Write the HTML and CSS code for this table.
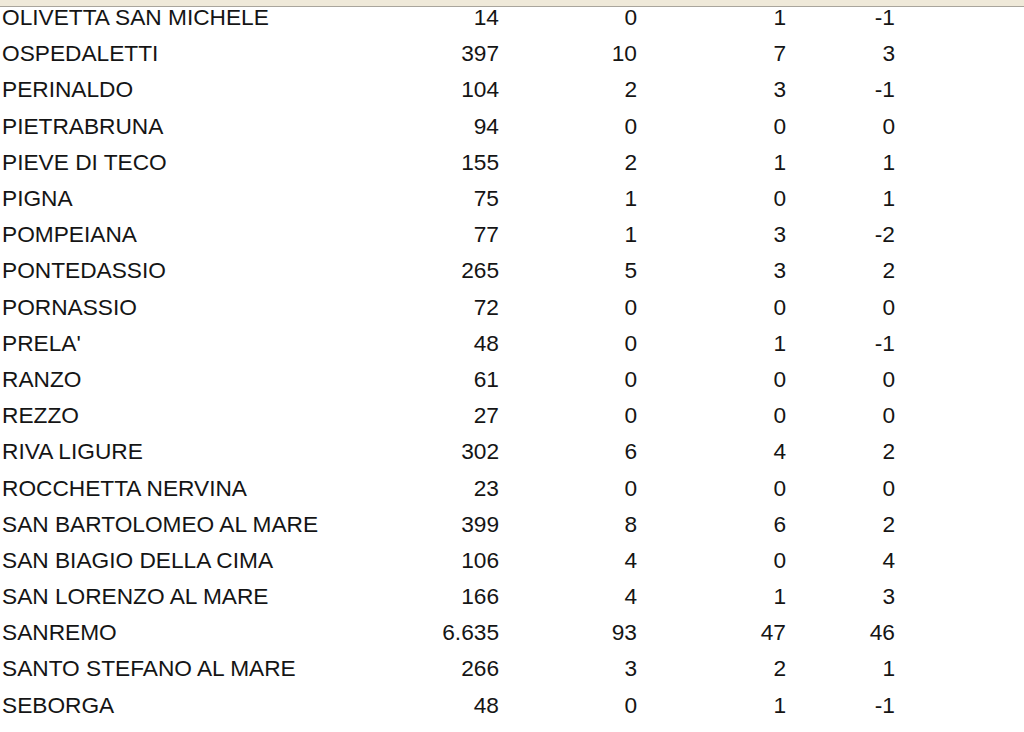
FILE: index.html
```html
<!DOCTYPE html>
<html lang="it">
<head>
<meta charset="utf-8">
<title>Comuni</title>
<link rel="stylesheet" href="styles.css">
</head>
<body>
<div class="topbar"></div>
<table class="data">
<tbody>
<tr><td class="name">OLIVETTA SAN MICHELE</td><td>14</td><td>0</td><td>1</td><td>-1</td></tr>
<tr><td class="name">OSPEDALETTI</td><td>397</td><td>10</td><td>7</td><td>3</td></tr>
<tr><td class="name">PERINALDO</td><td>104</td><td>2</td><td>3</td><td>-1</td></tr>
<tr><td class="name">PIETRABRUNA</td><td>94</td><td>0</td><td>0</td><td>0</td></tr>
<tr><td class="name">PIEVE DI TECO</td><td>155</td><td>2</td><td>1</td><td>1</td></tr>
<tr><td class="name">PIGNA</td><td>75</td><td>1</td><td>0</td><td>1</td></tr>
<tr><td class="name">POMPEIANA</td><td>77</td><td>1</td><td>3</td><td>-2</td></tr>
<tr><td class="name">PONTEDASSIO</td><td>265</td><td>5</td><td>3</td><td>2</td></tr>
<tr><td class="name">PORNASSIO</td><td>72</td><td>0</td><td>0</td><td>0</td></tr>
<tr><td class="name">PRELA'</td><td>48</td><td>0</td><td>1</td><td>-1</td></tr>
<tr><td class="name">RANZO</td><td>61</td><td>0</td><td>0</td><td>0</td></tr>
<tr><td class="name">REZZO</td><td>27</td><td>0</td><td>0</td><td>0</td></tr>
<tr><td class="name">RIVA LIGURE</td><td>302</td><td>6</td><td>4</td><td>2</td></tr>
<tr><td class="name">ROCCHETTA NERVINA</td><td>23</td><td>0</td><td>0</td><td>0</td></tr>
<tr><td class="name">SAN BARTOLOMEO AL MARE</td><td>399</td><td>8</td><td>6</td><td>2</td></tr>
<tr><td class="name">SAN BIAGIO DELLA CIMA</td><td>106</td><td>4</td><td>0</td><td>4</td></tr>
<tr><td class="name">SAN LORENZO AL MARE</td><td>166</td><td>4</td><td>1</td><td>3</td></tr>
<tr><td class="name">SANREMO</td><td>6.635</td><td>93</td><td>47</td><td>46</td></tr>
<tr><td class="name">SANTO STEFANO AL MARE</td><td>266</td><td>3</td><td>2</td><td>1</td></tr>
<tr><td class="name">SEBORGA</td><td>48</td><td>0</td><td>1</td><td>-1</td></tr>
</tbody>
</table>
</body>
</html>
```
FILE: styles.css
```css
html, body {
  margin: 0;
  padding: 0;
  background: #ffffff;
  overflow: hidden;
}
body {
  font-family: "Liberation Sans", Arial, sans-serif;
  color: #151515;
}
.topbar {
  position: fixed;
  top: 0;
  left: 0;
  right: 0;
  height: 6px;
  background: #efe9d9;
  border-bottom: 1px solid #a9a59c;
  z-index: 2;
}
.data {
  border-collapse: collapse;
  table-layout: fixed;
  width: 895px;
  margin-top: -1px;
  font-size: 22.7px;
}
.data td {
  height: 36.2px;
  padding: 0;
  text-align: right;
  vertical-align: middle;
  white-space: nowrap;
  line-height: 36px;
}
.data td.name {
  text-align: left;
  padding-left: 2px;
  width: 378px;
}
.data td:nth-child(2) { width: 119px; }
.data td:nth-child(3) { width: 138px; }
.data td:nth-child(4) { width: 149px; }
.data td:nth-child(5) { width: 109px; }
```
